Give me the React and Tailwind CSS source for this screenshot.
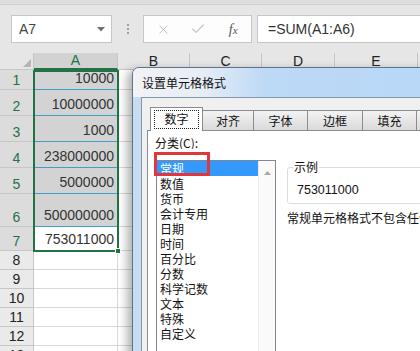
import React from 'react';
import { X, Check } from 'lucide-react';

const rows = [
  { n: 1, h: 'h-[20px]', v: '10000', sel: true, fill: true },
  { n: 2, h: 'h-[26px]', v: '10000000', sel: true, fill: true },
  { n: 3, h: 'h-[26px]', v: '1000', sel: true, fill: true },
  { n: 4, h: 'h-[26px]', v: '238000000', sel: true, fill: true },
  { n: 5, h: 'h-[26px]', v: '5000000', sel: true, fill: true },
  { n: 6, h: 'h-[33px]', v: '500000000', sel: true, fill: true },
  { n: 7, h: 'h-[24px]', v: '753011000', sel: true, fill: false },
  { n: 8, h: 'h-[19px]', v: '', sel: false, fill: false },
  { n: 9, h: 'h-[19px]', v: '', sel: false, fill: false },
  { n: 10, h: 'h-[19px]', v: '', sel: false, fill: false },
  { n: 11, h: 'h-[19px]', v: '', sel: false, fill: false },
  { n: 12, h: 'h-[19px]', v: '', sel: false, fill: false },
  { n: 13, h: 'h-[19px]', v: '', sel: false, fill: false },
];

const cols = [
  { l: 'B', w: 'w-[72px]' },
  { l: 'C', w: 'w-[72px]' },
  { l: 'D', w: 'w-[73px]' },
  { l: 'E', w: 'w-[83px]' },
  { l: 'F', w: 'w-[60px]' },
];

const tabs = [
  { t: '数字', w: 'w-[53px]', on: true },
  { t: '对齐', w: 'w-[51px]' },
  { t: '字体', w: 'w-[54px]' },
  { t: '边框', w: 'w-[55px]' },
  { t: '填充', w: 'w-[54px]' },
  { t: '保护', w: 'w-[54px]' },
];

const categories = ['常规', '数值', '货币', '会计专用', '日期', '时间', '百分比', '分数', '科学记数', '文本', '特殊', '自定义'];

export default function App() {
  return (
    <div className="relative w-[420px] h-[351px] overflow-hidden bg-[#e6e6e6] font-['Liberation_Sans',sans-serif]">
      {/* ribbon edge */}
      <div className="h-[5px] bg-[#dedede] border-b border-[#d0d0d0]" />

      {/* Formula bar */}
      <div className="mt-[10px] flex h-[28px]">
        <div className="ml-[11px] w-[101px] shrink-0 bg-white border border-[#c6c6c6] flex items-center pl-[7px] pr-[6px]">
          <span className="flex-1 text-[14px] text-[#444]">A7</span>
          <svg width="8" height="5" viewBox="0 0 8 5"><path d="M0 0h8L4 4.5z" fill="#707070" /></svg>
        </div>
        <div className="w-[31px] shrink-0 flex flex-col items-center justify-center gap-[2px]">
          <span className="w-[2px] h-[2px] bg-[#a0a0a0]" />
          <span className="w-[2px] h-[2px] bg-[#a0a0a0]" />
          <span className="w-[2px] h-[2px] bg-[#a0a0a0]" />
        </div>
        <div className="w-[109px] shrink-0 bg-[#fdfdfd] border border-[#c6c6c6] flex items-center">
          <span className="w-[36px] flex justify-center ml-[2px]"><X size={15} strokeWidth={1.3} color="#b8b8b8" /></span>
          <span className="w-[34px] flex justify-center"><Check size={16} strokeWidth={1.6} color="#c4c4c4" /></span>
          <span className="w-[36px] flex justify-center font-['Liberation_Serif',serif] italic text-[14px] text-[#555]">f<span className="text-[11px] mt-[3px]">x</span></span>
        </div>
        <div className="ml-[5px] flex-1 bg-white border border-r-0 border-[#c6c6c6] flex items-center pl-[10px] text-[14px] text-[#333]">
          =SUM(A1:A6)
        </div>
      </div>

      {/* Sheet */}
      <div className="relative mt-[10px]">
        <div className="flex h-[17px]">
          <div className="relative w-[34px] shrink-0 bg-[#e6e6e6] border-r border-b border-[#c6c6c6]">
            <svg className="absolute right-[2px] bottom-[2px]" width="8" height="8" viewBox="0 0 8 8"><path d="M8 0v8H0z" fill="#b4b4b4" /></svg>
          </div>
          <div className="w-[84px] shrink-0 bg-[#d2d2d2] border-r border-[#c6c6c6] border-b-2 border-b-[#217346] flex items-end justify-center text-[14px] leading-[16px] text-[#217346]">A</div>
          {cols.map((c) => (
            <div key={c.l} className={`${c.w} shrink-0 bg-[#e6e6e6] border-r border-b border-[#c6c6c6] flex items-end justify-center text-[14px] leading-[16px] text-[#222]`}>{c.l}</div>
          ))}
        </div>
        {rows.map((r) => (
          <div key={r.n} className={`flex ${r.h}`}>
            <div className={`w-[34px] shrink-0 flex items-end justify-center pb-[1px] text-[14px] leading-[16px] border-r border-b border-[#c6c6c6] ${r.sel ? 'bg-[#dcdcdc] text-[#217346]' : 'bg-[#eaeaea] text-[#222]'}`}>{r.n}</div>
            <div className={`w-[84px] shrink-0 flex items-end justify-end pr-[3px] pb-[2px] text-[14px] leading-[18px] text-[#333] border-r border-r-[#d9d9d9] border-b ${r.fill ? 'bg-[#d3d3d3] border-b-[#3f9fc6]' : 'bg-white border-b-[#d9d9d9]'}`}>{r.v}</div>
            {cols.map((c) => (
              <div key={c.l} className={`${c.w} shrink-0 bg-white border-r border-b border-[#d9d9d9]`} />
            ))}
          </div>
        ))}
        {/* selection */}
        <div className="absolute left-[33px] top-[17px] w-[86px] h-[182px] border-2 border-[#217346] pointer-events-none">
          <div className="absolute right-[-4px] bottom-[-4px] w-[6px] h-[6px] bg-[#217346] border border-white" />
        </div>
      </div>

      {/* Format Cells dialog */}
      <div className="absolute left-[132px] top-[67px] w-[320px] h-[300px] rounded-t-[7px] border border-[#5f7389] bg-[#c7dbf1] shadow-[-5px_3px_10px_rgba(0,0,0,0.3)] flex flex-col font-['Noto_Sans_CJK_SC',sans-serif]">
        <div className="h-[29px] shrink-0 rounded-t-[6px] bg-[linear-gradient(to_right,#f1f3f6_0%,#e6edf6_22%,#bcd9f6_42%,#b8d7f7_100%)] flex items-center pl-[9px] text-[12px] leading-[14px] text-[#111]">
          设置单元格格式
        </div>
        <div className="ml-[8px] flex-1 border border-[#8797aa] bg-[#f0f0f0] pl-[5px] pt-[9px] flex flex-col">
          <div className="relative z-10 -mb-px ml-[3px] flex items-end h-[24px]">
            {tabs.map((t) =>
              t.on ? (
                <div key={t.t} className={`${t.w} h-[24px] shrink-0 bg-white border border-b-0 border-[#898c95] flex items-center justify-center`}>
                  <span className="border border-dotted border-[#222] px-[9px] pt-[1px] pb-[2px] text-[12px] leading-[14px] text-[#111]">{t.t}</span>
                </div>
              ) : (
                <div key={t.t} className={`${t.w} h-[21px] shrink-0 bg-[linear-gradient(#f3f3f3,#dadada)] border border-l-0 border-[#898c95] flex items-center justify-center text-[12px] leading-[14px] text-[#111]`}>{t.t}</div>
              )
            )}
          </div>
          <div className="relative flex-1 bg-white border-l border-t border-[#898c95] pl-[7px] flex">
            <div className="w-[121px] shrink-0 flex flex-col">
              <div className="pt-[6px] h-[18px] text-[12px] leading-[12px] text-[#111] overflow-hidden">分类(<span className="underline">C</span>):</div>
              <div className="mt-[11px] ml-[1px] w-[120px] h-[200px] border border-[#828790] flex">
                <div className="flex-1 flex flex-col">
                  {categories.map((c, i) => (
                    <div key={c} className={`h-[15px] pl-[3px] text-[12px] leading-[15px] ${i === 0 ? 'bg-[#3399ff] text-white' : 'text-[#111]'}`}>{c}</div>
                  ))}
                </div>
                <div className="w-[17px] shrink-0 bg-[#fafafa] border-l border-[#ececec] flex justify-center pt-[10px]">
                  <svg width="7" height="4" viewBox="0 0 7 4"><path d="M3.5 0L7 4H0z" fill="#a8a8a8" /></svg>
                </div>
              </div>
            </div>
            <div className="ml-[11px] w-[200px] shrink-0 flex flex-col">
              <div className="relative mt-[36px] h-[37px] rounded-[3px] border border-[#d5dfe5] pl-[9px] pt-[15px] text-[12.5px] leading-[14px] text-[#111] font-['Liberation_Sans',sans-serif]">
                <span className="absolute left-[5px] top-[-8px] px-[1px] bg-white text-[12px] leading-[14px] font-['Noto_Sans_CJK_SC',sans-serif]">示例</span>
                753011000
              </div>
              <div className="mt-[7px] whitespace-nowrap text-[12px] leading-[14px] text-[#111]">常规单元格格式不包含任何特定的数字格式。</div>
            </div>
            {/* annotation */}
            <div className="absolute left-[6px] top-[21px] w-[56px] h-[24px] border-[3px] border-[#e0373d] pointer-events-none" />
          </div>
        </div>
      </div>
    </div>
  );
}
